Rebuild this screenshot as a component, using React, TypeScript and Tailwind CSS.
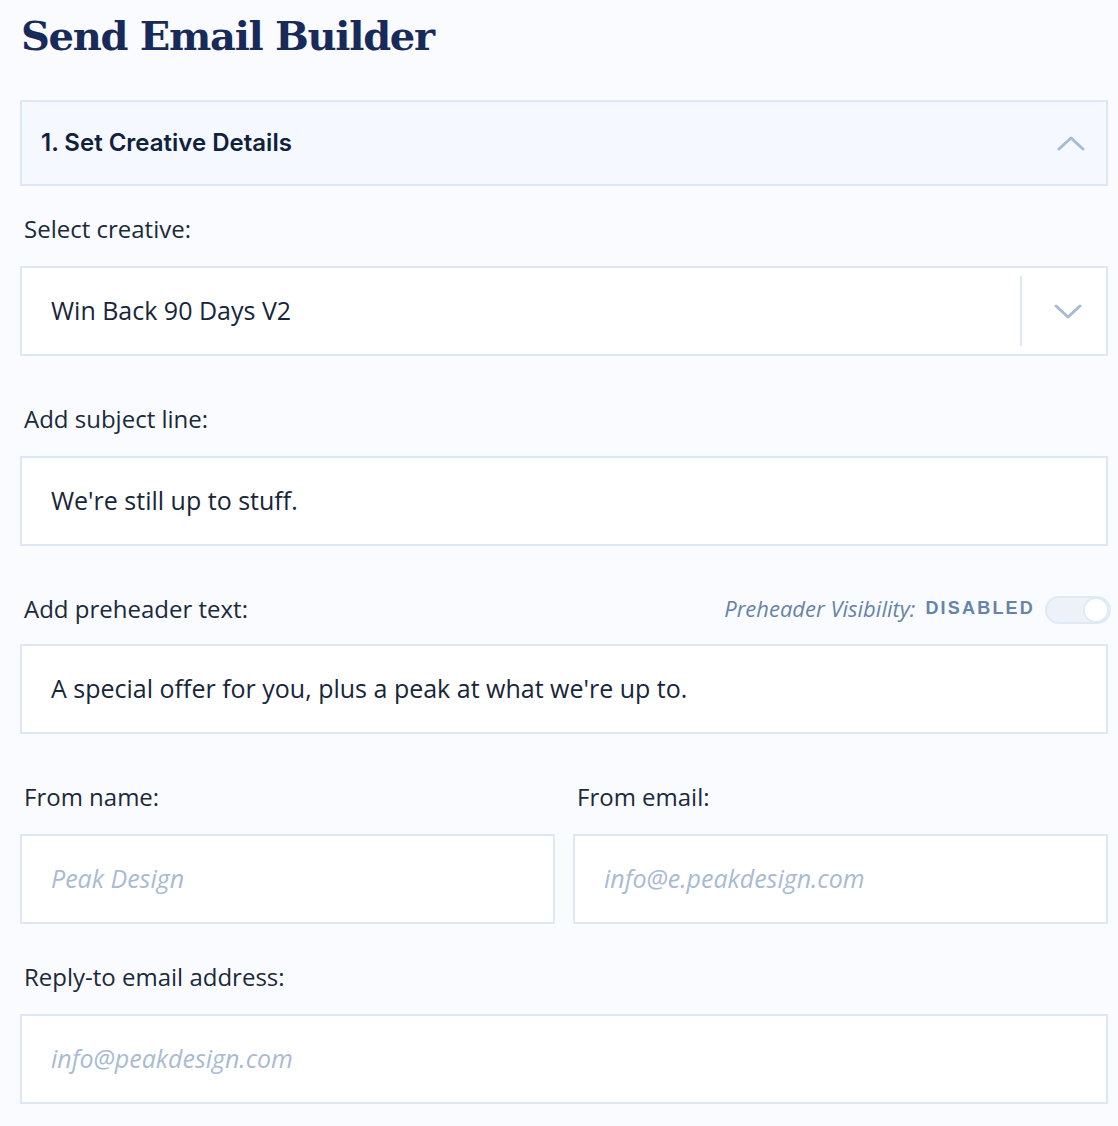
import React from "react";

const Label = ({ children }: { children: React.ReactNode }) => (
    <div className="pl-[4px] text-[24px] leading-[30px] text-[#1b2a3b]">{children}</div>
);

const TextBox = ({ value, placeholder }: { value?: string; placeholder?: string }) => (
    <div className="flex h-[90px] items-center border-2 border-[#dde8f6] bg-white pl-[29px]">
        {value ? (
            <span className="text-[25px] text-[#17263a]">{value}</span>
        ) : (
            <span className="text-[25px] italic text-[#a9bbd3]">{placeholder}</span>
        )}
    </div>
);

const Chevron = ({ up }: { up?: boolean }) => (
    <svg width="28" height="16" viewBox="0 0 28 16" fill="none" className={up ? "" : "rotate-180"}>
        <path d="M2 14 L14 3 L26 14" stroke="#a6bcd6" strokeWidth="3" strokeLinecap="round" strokeLinejoin="round" />
    </svg>
);

export default function App() {
    return (
        <div
            className="min-h-[1126px] bg-[#f9fbfe] pl-[20px] pr-[10px]"
            style={{ fontFamily: '"Open Sans", sans-serif' }}
        >
            <h1
                className="pl-[1px] pt-[10px] text-[40px] font-bold leading-[52px] tracking-[-1.3px] text-[#172a59]"
                style={{ fontFamily: '"DejaVu Serif", serif' }}
            >
                Send Email Builder
            </h1>

            <div className="mt-[38px] flex h-[86px] items-center justify-between border-2 border-[#dde8f6] bg-[#f5f8fe] pl-[19px] pr-[21px]">
                <span className="text-[24px] font-semibold text-[#0f213b]" style={{ fontFamily: "Inter, sans-serif" }}>
                    1. Set Creative Details
                </span>
                <Chevron up />
            </div>

            <div className="mt-[28px]">
                <Label>Select creative:</Label>
                <div className="mt-[22px] flex h-[90px] items-center border-2 border-[#dde8f6] bg-white">
                    <span className="flex-1 pl-[29px] text-[25px] text-[#17263a]">Win Back 90 Days V2</span>
                    <div className="h-[70px] w-[2px] bg-[#dde8f6]" />
                    <div className="flex w-[84px] items-center justify-center pl-[8px] pt-[2px]">
                        <Chevron />
                    </div>
                </div>

                <div className="mt-[48px]">
                    <Label>Add subject line:</Label>
                    <div className="mt-[22px]">
                        <TextBox value="We're still up to stuff." />
                    </div>
                </div>

                <div className="mt-[46px]">
                    <div className="flex items-center justify-between">
                        <Label>Add preheader text:</Label>
                        <div className="-mr-[3px] flex items-center">
                            <span className="text-[22px] italic text-[#6883a8]">Preheader Visibility:</span>
                            <span
                                className="ml-[10px] text-[18px] font-bold tracking-[2.2px] text-[#6883a8]"
                                style={{ fontFamily: '"Liberation Sans", sans-serif' }}
                            >
                                DISABLED
                            </span>
                            <div className="ml-[10px] mt-[2px] flex h-[28px] w-[66px] items-center justify-end rounded-full border-2 border-[#e0eaf7] bg-[#edf2f8]">
                                <div className="h-[26px] w-[26px] rounded-full border-2 border-[#e0eaf7] bg-white" />
                            </div>
                        </div>
                    </div>
                    <div className="mt-[19px]">
                        <TextBox value="A special offer for you, plus a peak at what we're up to." />
                    </div>
                </div>

                <div className="mt-[48px] grid grid-cols-2 gap-[18px]">
                    <div>
                        <Label>From name:</Label>
                        <div className="mt-[22px]">
                            <TextBox placeholder="Peak Design" />
                        </div>
                    </div>
                    <div>
                        <Label>From email:</Label>
                        <div className="mt-[22px]">
                            <TextBox placeholder="info@e.peakdesign.com" />
                        </div>
                    </div>
                </div>

                <div className="mt-[38px]">
                    <Label>Reply-to email address:</Label>
                    <div className="mt-[22px]">
                        <TextBox placeholder="info@peakdesign.com" />
                    </div>
                </div>
            </div>
        </div>
    );
}
